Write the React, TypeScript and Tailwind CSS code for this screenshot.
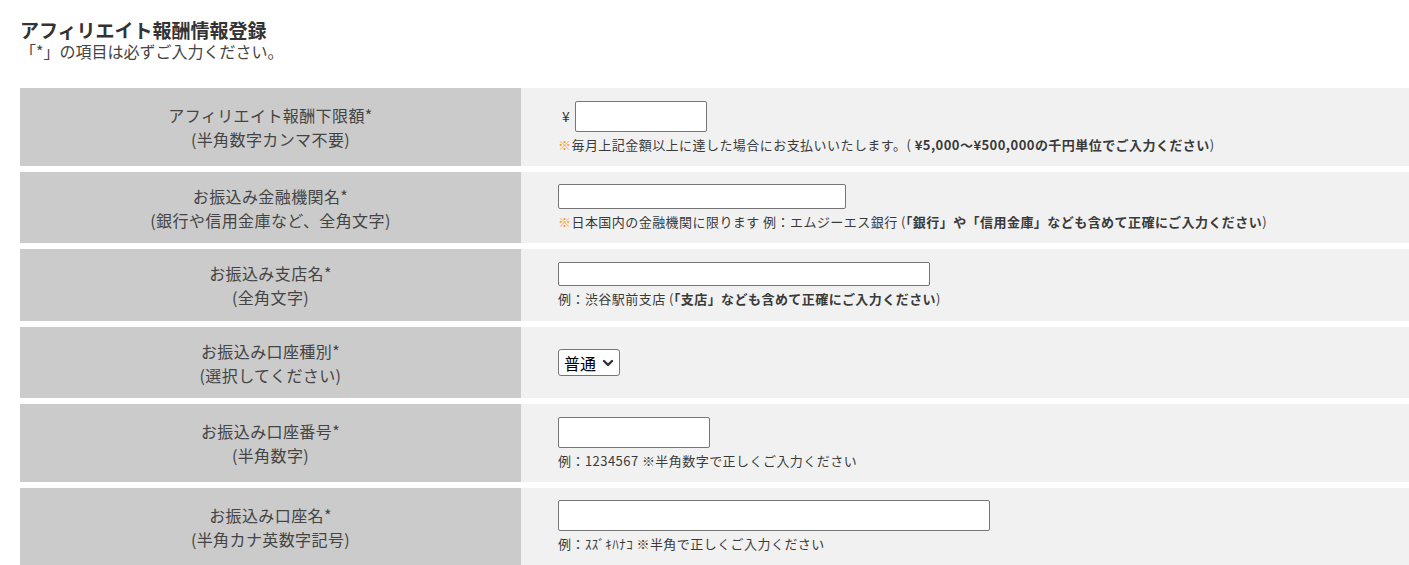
const font = { fontFamily: '"Noto Sans CJK JP", "Noto Sans", sans-serif' };

function Label({ main, sub }: { main: string; sub: string }) {
  return (
    <div className="flex w-[501px] shrink-0 flex-col items-center justify-center bg-[#cbcbcb] text-[16px] leading-[24px] tracking-[0.4px] text-[#444]">
      <span>{main}</span>
      <span>{sub}</span>
    </div>
  );
}

function Note({ children }: { children: React.ReactNode }) {
  return <p className="mt-[4px] text-[13px] leading-[18px] tracking-[0.45px] text-[#3a3a3a]">{children}</p>;
}

const mark = <span className="text-[#f0a030]">※</span>;

export default function App() {
  return (
    <div className="min-h-[565px] bg-white pl-[20px] text-[#333]" style={font}>
      <div className="pt-[17px]">
        <h1 className="text-[19px] font-bold leading-[25px] text-[#333]">アフィリエイト報酬情報登録</h1>
        <p className="text-[16px] leading-[19px] text-[#444]">「*」の項目は必ずご入力ください。</p>
      </div>

      <div className="mt-[27px] flex flex-col gap-[6px]">
        <div className="flex h-[78px]">
          <Label main="アフィリエイト報酬下限額*" sub="(半角数字カンマ不要)" />
          <div className="flex flex-1 flex-col justify-center bg-[#f1f1f1] pl-[37px]">
            <div className="flex items-center">
              <span className="ml-[4px] mr-[5px] text-[14px]">¥</span>
              <input className="h-[31px] w-[132px] rounded-[2px] border border-[#767676] bg-white" />
            </div>
            <Note>
              {mark}毎月上記金額以上に達した場合にお支払いいたします。(
              <b className="font-bold"> ¥5,000～¥500,000の千円単位でご入力ください</b>)
            </Note>
          </div>
        </div>

        <div className="flex h-[71px]">
          <Label main="お振込み金融機関名*" sub="(銀行や信用金庫など、全角文字)" />
          <div className="flex flex-1 flex-col justify-center bg-[#f1f1f1] pl-[37px]">
            <input className="h-[25px] w-[288px] rounded-[2px] border border-[#767676] bg-white" />
            <Note>
              {mark}日本国内の金融機関に限ります 例：エムジーエス銀行 (
              <b className="font-bold">「銀行」や「信用金庫」なども含めて正確にご入力ください</b>)
            </Note>
          </div>
        </div>

        <div className="flex h-[72px]">
          <Label main="お振込み支店名*" sub="(全角文字)" />
          <div className="flex flex-1 flex-col justify-center bg-[#f1f1f1] pl-[37px]">
            <input className="h-[24px] w-[372px] rounded-[2px] border border-[#767676] bg-white" />
            <Note>
              例：渋谷駅前支店 (<b className="font-bold">「支店」なども含めて正確にご入力ください</b>)
            </Note>
          </div>
        </div>

        <div className="flex h-[71px]">
          <Label main="お振込み口座種別*" sub="(選択してください)" />
          <div className="flex flex-1 items-center bg-[#f1f1f1] pl-[37px]">
            <div className="flex h-[27px] w-[62px] items-center justify-between rounded-[3px] border border-[#767676] bg-white pl-[5px] pr-[5px]">
              <span className="text-[16px] leading-[20px] text-black">普通</span>
              <svg width="12" height="12" viewBox="0 0 12 12" fill="none">
                <polyline points="2,4 6,8 10,4" stroke="#333" strokeWidth="2.4" strokeLinecap="round" strokeLinejoin="round" />
              </svg>
            </div>
          </div>
        </div>

        <div className="flex h-[78px]">
          <Label main="お振込み口座番号*" sub="(半角数字)" />
          <div className="flex flex-1 flex-col justify-center bg-[#f1f1f1] pl-[37px]">
            <input className="h-[31px] w-[152px] rounded-[2px] border border-[#767676] bg-white" />
            <Note>例：1234567 ※半角数字で正しくご入力ください</Note>
          </div>
        </div>

        <div className="flex h-[77px]">
          <Label main="お振込み口座名*" sub="(半角カナ英数字記号)" />
          <div className="flex flex-1 flex-col justify-center bg-[#f1f1f1] pl-[37px]">
            <input className="h-[31px] w-[432px] rounded-[2px] border border-[#767676] bg-white" />
            <Note>例：ｽｽﾞｷﾊﾅｺ ※半角で正しくご入力ください</Note>
          </div>
        </div>
      </div>
    </div>
  );
}
